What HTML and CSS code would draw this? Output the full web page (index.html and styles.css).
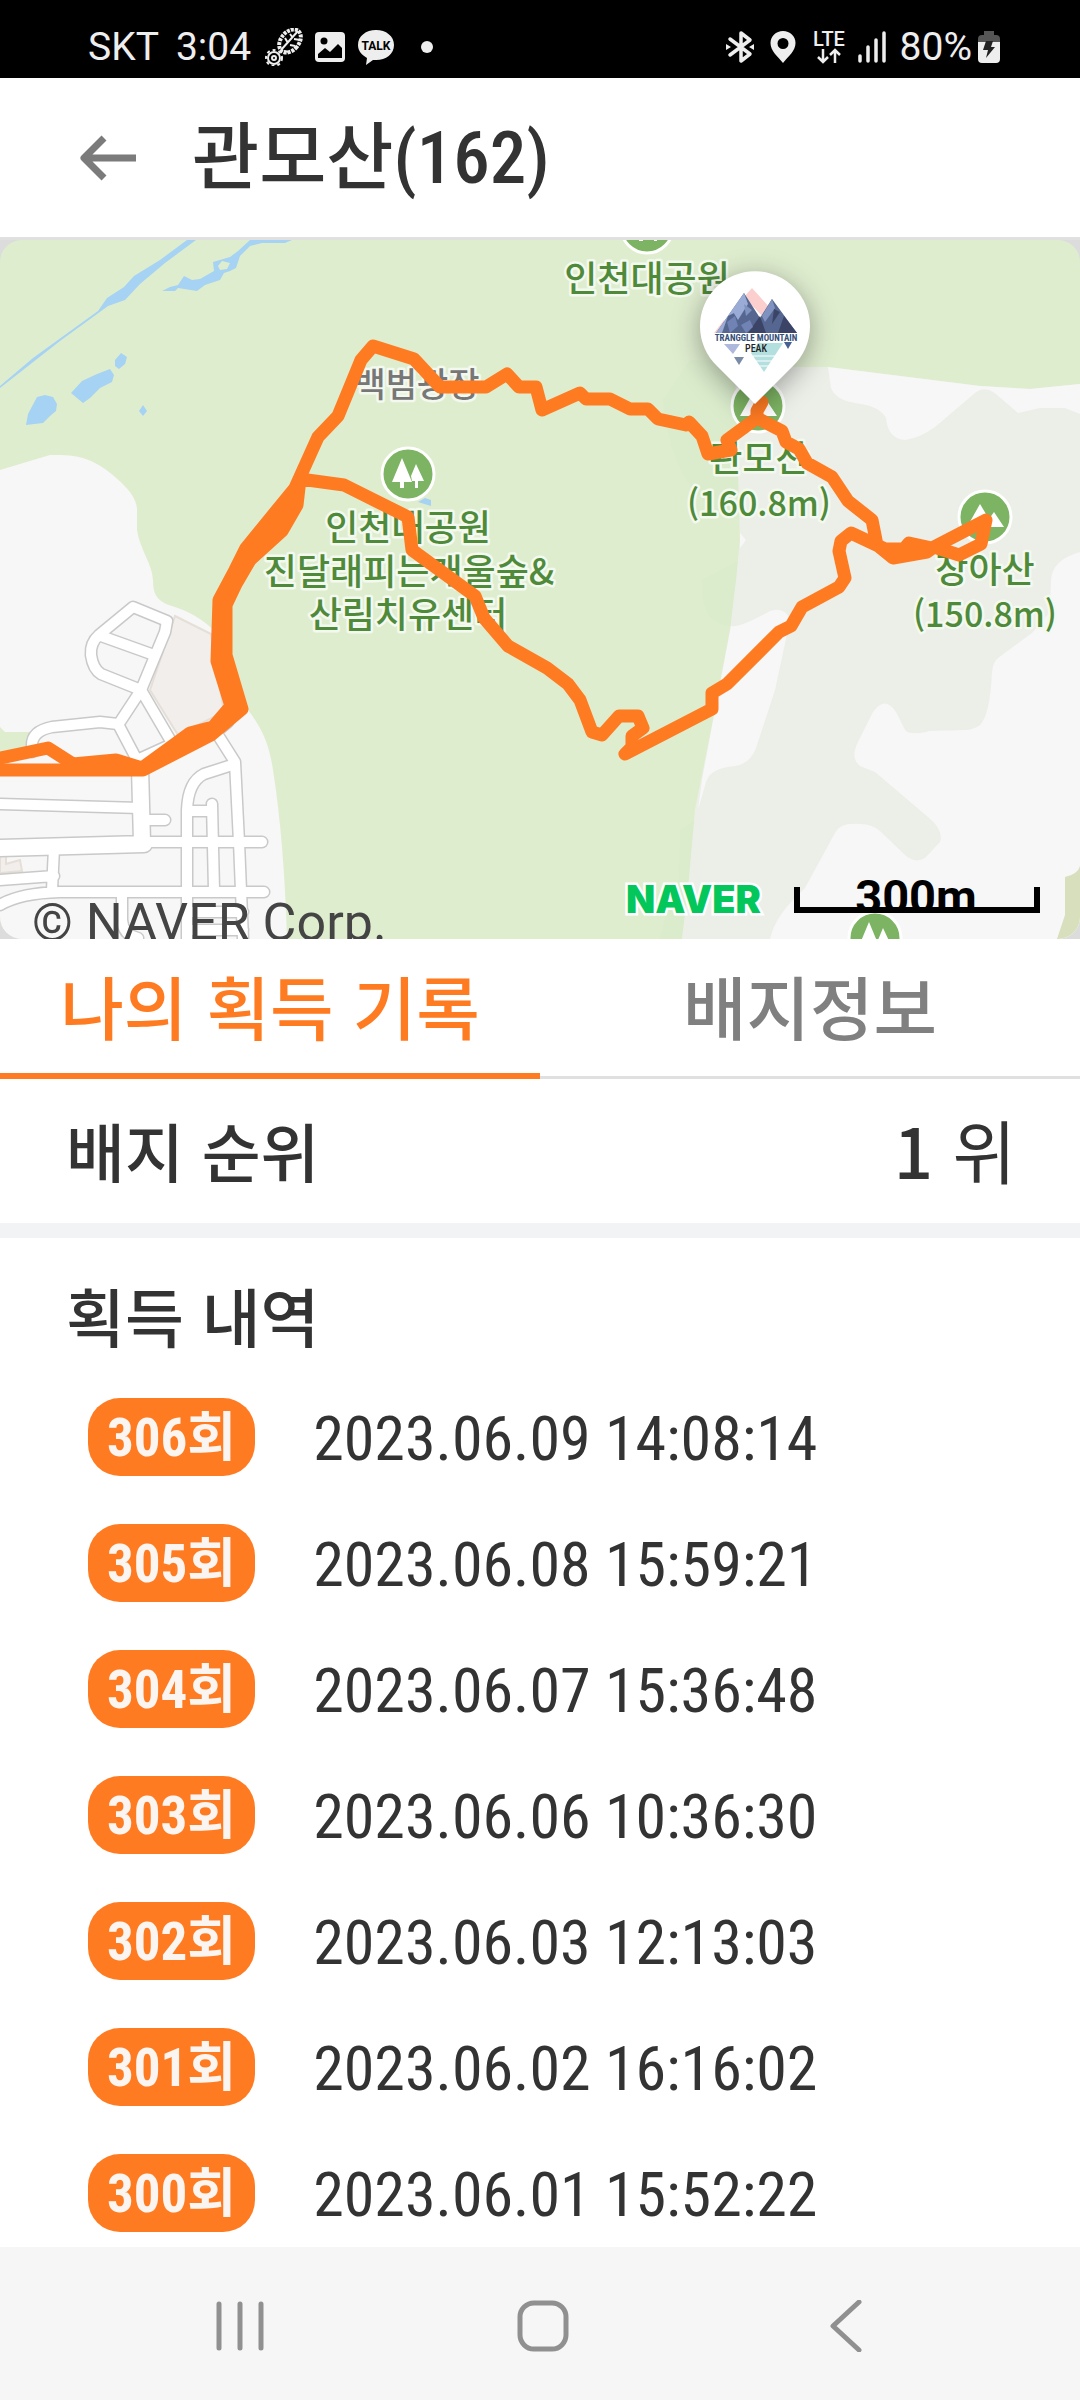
FILE: index.html
```html
<!DOCTYPE html>
<html lang="ko">
  <head>
    <meta charset="UTF-8" />
    <meta name="viewport" content="width=device-width, initial-scale=1.0" />
    <title>관모산(162)</title>
    <link rel="stylesheet" href="styles.css">
  </head>
  <body>
    <div class="status-bar">
      <div class="status-left">
        <span>SKT</span>
        <span class="clock">3:04</span>
        <svg class="icon-boot" width="38" height="38" viewBox="0 0 38 38">
          <g fill="none" stroke="#eee">
            <ellipse cx="25" cy="13" rx="9" ry="13" transform="rotate(40 25 13)" stroke-width="4" stroke-dasharray="3 1" />
            <path d="M16 22L33 3M20 10l3 5M25 6l3 4M19 23l5 1M25 17l5 1M29 11l6 1" stroke-width="2" />
            <circle cx="9" cy="30" r="6" stroke-width="2" />
            <circle cx="9" cy="30" r="8" stroke-width="2" stroke-dasharray="3 3" />
            <circle cx="9" cy="30" r="2" stroke-width="2" />
          </g>
        </svg>
        <svg class="icon-photo" width="30" height="32" viewBox="0 0 30 32">
          <rect y="1" width="30" height="30" rx="4" fill="#eee" />
          <circle cx="9" cy="10" r="3.5" fill="#000" />
          <path d="M3 23l7-6 5 4 8-8 4 4v10H3z" fill="#000" />
        </svg>
        <svg class="icon-talk" width="36" height="36" viewBox="0 0 36 36">
          <path d="M18 1c10 0 18 6 18 15s-8 15-18 15l-3 0-7 5 1-7C4 26 0 22 0 16 0 7 8 1 18 1z" fill="#eee" />
          <text x="18" y="21" text-anchor="middle" class="talk-text">TALK</text>
        </svg>
        <i class="dot"></i>
      </div>
      <div class="status-right">
        <svg width="28" height="34" viewBox="0 0 28 34">
          <path d="M4 9l20 15-9 7V3l9 7L4 25" fill="none" stroke="#eee" stroke-width="3.5" stroke-linejoin="round" stroke-linecap="round" />
          <path d="M0 14l5 3-5 3zM28 14l-5 3 5 3z" fill="#eee" />
        </svg>
        <svg class="icon-place" width="26" height="32" viewBox="0 0 26 32">
          <path fill-rule="evenodd" d="M13 0c7 0 12.500 5 12.500 12 0 8-7 13-12.500 20C7.500 25 .5 20 .5 12 .5 5 6 0 13 0zm0 7a5.500 5.500 0 1 0 0 11 5.500 5.500 0 0 0 0-11z" fill="#eee" />
        </svg>
        <svg class="icon-lte" width="35" height="36" viewBox="0 0 35 36">
          <text x="17" y="17" text-anchor="middle" class="lte-text">LTE</text>
          <path d="M11 20v13m-5-5l5 5 5-5M23 34V21m-5 5l5-5 5 5" fill="none" stroke="#eee" stroke-width="2.500" />
        </svg>
        <svg class="icon-signal" width="28" height="32" viewBox="0 0 28 32">
          <path d="M2 25v5M10 16v14M18 9v21M26 2v28" stroke="#eee" stroke-width="3.500" stroke-linecap="round" />
        </svg>
        <span>80%</span>
        <svg class="icon-battery" width="22" height="34" viewBox="0 0 22 34">
          <path d="M6 1h10v4h2q4 0 4 4v4H0V9q0-4 4-4h2z" fill="#555" />
          <path d="M0 12h22v17q0 4-4 4H4q-4 0-4-4z" fill="#eee" />
          <path d="M8 11h7l-2 6h4L8 28l2-8H5z" fill="#222" />
        </svg>
      </div>
    </div>

    <header class="header">
      <button class="back" aria-label="뒤로">
        <svg width="58" height="48" viewBox="0 0 58 48">
          <path d="M24 4L4 24l20 20M4 24h52" fill="none" stroke="#7b7b7b" stroke-width="7" stroke-linejoin="round" />
        </svg>
      </button>
      <h1>관모산(162)</h1>
    </header>

    <div class="map">
      <!-- y starts at 240, the height of the bars above -->
      <svg class="map-canvas" viewBox="0 240 1080 699">
        <defs>
          <g id="trees">
            <circle r="26" fill="#7db463" stroke="#fff" stroke-width="3" />
            <path d="M-6-16L4 8H-4v6h-4V8h-8zM8-10l8 17h-6v7H7V7H4L3 2z" fill="#fff" />
          </g>
          <g id="peak">
            <circle r="26" fill="#7db463" stroke="#fff" stroke-width="3" />
            <path d="M-18 10L-5-13 4 2l5-7L19 10z" fill="#fff" />
          </g>
          <g id="roads">
            <path d="M141 690L101 674Q93 669 91 655 90 643 99 635L133 607 167 621 165 632 141 690M101 636L154 655" />
            <path d="M141 690L118 725M32 752V745Q32 731 52 727L100 722 118 724 137 760M141 690L172 743M137 760L170 745" />
            <path d="M0 804L140 808M142 820H165M54 848L52 890M0 880L54 876M0 905Q20 893 60 892H264" />
            <path d="M187 939V810Q188 782 204 774L232 765M190 811H212M212 804L214 890M228 722L216 732 235 762 239 842 243 939M122 895V920Q123 935 138 938M190 912H243M190 930H243" />
            <path d="M135 842H262" />
          </g>
          <g id="main-roads">
            <path d="M140 768L142 842M0 848L144 844" />
          </g>
        </defs>

        <rect y="240" width="1080" height="700" fill="#dfedcf" />

        <!-- water -->
        <g fill="#a6d2f3">
          <path d="M0 386L33 358 98 311 107 298 124 287 134 276 160 260 187 240H196L165 263 140 284 125 300 108 306 60 341 0 388z" />
          <path fill-rule="evenodd" d="M162 291L170 287 178 285 184 276 192 280 200 279 214 271 213 262 230 257 238 251 250 240H292L285 243 262 243 250 246 240 256 236 268 230 271 224 273 220 280 205 285 197 291 178 288 175 291zM218 266L222 261 230 263 227 269 220 270z" />
          <path d="M71 393L82 381 97 374 110 369 114 375 112 382 100 388 90 398 83 403z" />
          <path d="M115 360L121 353 127 357 125 364 119 369 115 366z" />
          <path d="M26 425L28 414 37 397 45 395 53 397 57 404 56 411 50 416 43 423z" />
          <path d="M139 411L143 405 147 411 143 416zM418 502L425 498 431 500V506z" />
        </g>

        <!-- town on the left -->
        <path d="M0 470L50 455C80 454 92 460 105 469 125 484 137 497 137 510V530C140 550 152 563 153 580 153 595 157 602 175 607Q205 617 222 640L248 710C265 732 270 750 273 770Q284 840 287 939H0z" fill="#f7f7f7" />
        <path d="M0 727L5 732H30L27 750 0 756z" fill="#dfedcf" />
        <path d="M175 616L211 634 224 712 178 735 150 690zM0 855H6V864L20 860 22 871 0 873z" fill="#f2eeeb" stroke="#e5dfd8" stroke-width="2" />
        <g fill="none" stroke-linecap="round" stroke-linejoin="round">
          <use href="#roads" stroke="#c9c9c9" stroke-width="13" />
          <use href="#main-roads" stroke="#c9c9c9" stroke-width="19" />
          <use href="#roads" stroke="#fff" stroke-width="10" />
          <use href="#main-roads" stroke="#fff" stroke-width="16" />
        </g>

        <!-- hills on the right -->
        <path d="M663 400Q672 500 740 520V360H690zM702 580Q700 625 731 626L740 560zM680 830L695 820 682 939H660Q668 900 679 880z" fill="#daeccc" />
        <path d="M735 367H828L900 376 980 386 1030 389 1080 384V939H682L688 890 695 810 715 710 730 630 736 580 740 540z" fill="#ecefe8" />
        <g fill="#f7f7f7">
          <path d="M828 367L831 388Q836 400 855 403 880 406 886 418 888 439 905 440 920 438 935 427L975 393Q985 385 996 394L1018 413 1040 408H1065L1080 414V384L1030 389 980 386 900 376z" />
          <path d="M731 626Q740 628 770 611 785 606 790 620L775 690 756 748Q750 764 735 766 710 768 706 782L698 810 702 780 715 710z" />
          <path d="M1080 552Q1052 560 1051 580L1050 612 1032 633 998 658Q993 662 992 672 990 715 980 725 973 730 965 730L930 731Q910 736 905 730L896 712Q885 695 873 712L858 742Q850 758 860 766L875 772 928 817Q944 830 940 842L925 858Q915 864 905 855L880 831Q872 824 860 824 840 822 835 833L805 888Q775 915 770 939H1080zM740 533L746 540 740 548z" />
        </g>
        <path d="M1065 877Q1078 874 1080 866V939H1057L1065 915z" fill="#d8dfbd" />

        <use href="#trees" x="647" y="227" />
        <use href="#trees" x="408" y="474" />
        <use href="#trees" x="875" y="938" />
        <use href="#peak" x="758" y="406" />
        <use href="#peak" x="985" y="517" />

        <g class="place">
          <text x="647" y="292">인천대공원</text>
          <text x="417" y="397" class="plaza">백범광장</text>
          <text x="408" y="541">인천대공원</text>
          <text x="409" y="585">진달래피는개울숲&amp;</text>
          <text x="408" y="628">산림치유센터</text>
          <text x="759" y="472">관모산</text>
          <text x="759" y="516" class="elevation">(160.8m)</text>
          <text x="985" y="583">장아산</text>
          <text x="985" y="627" class="elevation">(150.8m)</text>
        </g>

        <!-- walked track -->
        <g fill="none" stroke="#ff7b22" stroke-width="13" stroke-linejoin="round" stroke-linecap="round">
          <path d="M-9 760L48 748 73 764 116 760 142 768 190 733 213 727 231 706 217 661 219 600 235 570 246 548 295 488 318 437 338 416 361 360 373 346 414 359 440 387H486L507 374 519 387H536L542 410 580 393 586 399H610L630 409H648L658 419 686 425 689 422 702 436 708 454 731 450 727 440 757 418V411L762 402" />
          <path d="M757 418L782 431 786 442 799 449 807 463 832 477 848 501 872 520 877 545 893 558 927 552 934 547 959 555 981 544 986 520 932 548 909 543 904 549H885L851 533 841 541 839 551 845 578 839 587 802 607 791 626 779 632 727 684 712 693V709L625 754 632 747V736L643 728 638 716H619L602 735 592 732 580 700 568 684 547 668 508 646 484 618 475 596 412 550 408 517 344 485 300 479 297 505 282 531 250 560 236 584 226 605V655L242 709 211 735 143 770H-9" />
          <path d="M293 492L262 540 234 585M224 605L222 655 236 704" />
        </g>

        <!-- badge pin -->
        <g class="pin">
          <path d="M755 404L717 366A55 55 0 1 1 793 366z" fill="#fff" />
        </g>
        <path d="M752 288L770 308 764 318 744 297zM714 333L724 320 726 333z" fill="#fbcfcd" />
        <path d="M716 333L744 293 760 318 772 299 797 333z" fill="#556690" />
        <path d="M716 333L744 293 740 310 728 316 722 333zM732 310L744 293 748 304 738 320z" fill="#9aacd6" />
        <path d="M762 316L772 299 775 308 765 322zM744 304L752 310 746 316z" fill="#8093c0" />
        <path d="M748 333L760 316 766 333zM778 333L784 316 797 333zM772 324L780 312 774 309z" fill="#3b4467" />
        <path d="M727 322L735 316 738 326 730 333zM741 325L750 320 753 327 746 333z" fill="#7183b4" />
        <path d="M724 344H740L733 354z" fill="#aeb7dc" />
        <path d="M734 357H744L739 365z" fill="#7a8ba8" />
        <path d="M784 342H792L788 349z" fill="#486091" />
        <path d="M751 353L758 343H783L764 372z" fill="#b3dfdf" />
        <path d="M753 356H775M756 361H772M759 366H769" stroke="#fff" />
        <text x="756" y="341" text-anchor="middle" class="badge-name">TRANGGLE MOUNTAIN</text>
        <text x="756" y="352" text-anchor="middle" class="badge-sub">PEAK</text>

        <text x="626" y="913" class="naver">NAVER</text>
        <path d="M797 887V910H1037V887" fill="none" stroke="#000" stroke-width="6" />
        <text x="916" y="913" text-anchor="middle" class="scale">300m</text>
        <text x="32" y="940" class="copyright">© NAVER Corp.</text>
      </svg>
    </div>

    <nav class="tabs">
      <button class="tab active">나의 획득 기록</button>
      <button class="tab">배지정보</button>
    </nav>

    <section class="rank">
      <h2>배지 순위</h2>
      <p><b>1</b> 위</p>
    </section>

    <section class="history">
      <h2>획득 내역</h2>
      <ul>
        <li><span class="count">306회</span><time>2023.06.09 14:08:14</time></li>
        <li><span class="count">305회</span><time>2023.06.08 15:59:21</time></li>
        <li><span class="count">304회</span><time>2023.06.07 15:36:48</time></li>
        <li><span class="count">303회</span><time>2023.06.06 10:36:30</time></li>
        <li><span class="count">302회</span><time>2023.06.03 12:13:03</time></li>
        <li><span class="count">301회</span><time>2023.06.02 16:16:02</time></li>
        <li><span class="count">300회</span><time>2023.06.01 15:52:22</time></li>
      </ul>
    </section>

    <nav class="system-nav">
      <button aria-label="최근 앱">
        <svg width="52" height="52" viewBox="0 0 52 52">
          <path d="M4 4v44M25 4v44M46 4v44" />
        </svg>
      </button>
      <button aria-label="홈">
        <svg width="52" height="52" viewBox="0 0 52 52">
          <rect x="3" y="3" width="46" height="46" rx="14" />
        </svg>
      </button>
      <button aria-label="뒤로">
        <svg width="52" height="52" viewBox="0 0 52 52">
          <path d="M40 2L14 26l26 24" />
        </svg>
      </button>
    </nav>
  </body>
</html>
```
FILE: styles.css
```css
* {
  box-sizing: border-box;
}

body {
  margin: 0;
  min-height: 100vh;
  display: flex;
  flex-direction: column;
  background-color: #fff;
  color: #333;
  font-family: "Noto Sans CJK KR", sans-serif;
}

h1,
h2,
p,
ul {
  margin: 0;
  padding: 0;
}

svg {
  display: block;
  flex-shrink: 0;
}

button {
  border: 0;
  padding: 0;
  background: none;
  font-family: inherit;
}

/* narrow digits */
h1,
.count,
time {
  font-family: "Roboto Condensed", "Noto Sans CJK KR", sans-serif;
}

/* status bar */
.status-bar {
  display: flex;
  justify-content: space-between;
  align-items: center;
  height: 78px;
  padding: 16px 80px 0 88px;
  background-color: #000;
  color: #eee;
  font-family: Roboto, sans-serif;
  font-size: 39px;
  line-height: 40px;
}

.status-left,
.status-right {
  display: flex;
  align-items: center;
}

.clock {
  margin: 0 14px 0 17px;
}

.icon-photo {
  margin: 0 13px 0 12px;
}

.dot {
  width: 12px;
  height: 12px;
  margin-left: 27px;
  border-radius: 50%;
  background-color: #eee;
}

.icon-place,
.icon-lte {
  margin-left: 16px;
}

.icon-signal {
  margin: 0 14px 0 11px;
}

.icon-battery {
  margin-left: 6px;
}

.talk-text {
  font: 700 12px Roboto, sans-serif;
}

.lte-text {
  font: 500 20px Roboto, sans-serif;
  fill: #eee;
}

/* header */
.header {
  display: flex;
  align-items: center;
  height: 162px;
  padding: 0 80px;
  border-bottom: 3px solid #e0e0e0;
}

.back {
  margin-right: 54px;
}

h1 {
  font-size: 73px;
  font-weight: 500;
  line-height: 82px;
}

/* map */
.map {
  background-color: #dcdcdc;
}

.map-canvas {
  width: 100%;
  border-radius: 22px;
}

.place {
  font: 500 36px "Noto Sans CJK KR", sans-serif;
  text-anchor: middle;
  fill: #4f8a3a;
  stroke: #f4f9ef;
  stroke-width: 5px;
  stroke-linejoin: round;
  paint-order: stroke;
}

.plaza {
  font-size: 34px;
  fill: #777;
}

.elevation {
  font-size: 34px;
}

.pin {
  filter: drop-shadow(0 6px 14px rgba(0, 0, 0, 0.35));
}

.badge-name {
  font: 700 9px "Roboto Condensed", sans-serif;
  fill: #344f7a;
}

.badge-sub {
  font: 500 10px "Roboto Condensed", sans-serif;
  fill: #222;
}

.naver {
  font: 900 38px Inter, sans-serif;
  fill: #03c75a;
  stroke: #fff;
  stroke-width: 5px;
  paint-order: stroke;
}

.scale {
  font: 700 47px Roboto, sans-serif;
}

.copyright {
  font: 400 52px Roboto, sans-serif;
  fill: #444;
}

/* tabs */
.tabs {
  display: flex;
  height: 140px;
}

.tab {
  flex: 1;
  padding-bottom: 6px;
  border-bottom: 3px solid #e0e0e0;
  color: #808080;
  font-size: 69px;
  font-weight: 500;
  line-height: 80px;
}

.tab.active {
  padding-bottom: 3px;
  border-bottom: 6px solid #ff7b22;
  color: #ff7b22;
}

/* rank */
h2 {
  font-size: 64px;
  font-weight: 500;
  line-height: 80px;
}

.rank {
  display: flex;
  justify-content: space-between;
  align-items: center;
  height: 159px;
  padding: 0 64px 4px 66px;
  border-bottom: 15px solid #f1f3f5;
}

.rank p {
  font-size: 69px;
  line-height: 80px;
}

.rank b {
  font-weight: 500;
}

/* history */
.history {
  flex: 1;
  padding: 36px 66px 15px;
}

.history ul {
  display: flex;
  flex-direction: column;
  gap: 48px;
  padding: 44px 22px 0;
  list-style: none;
}

.history li {
  display: flex;
  align-items: center;
  gap: 58px;
}

.count {
  height: 78px;
  padding: 0 19px;
  border-radius: 32px;
  background-color: #ff7b22;
  color: #faf5f0;
  font-size: 53px;
  font-weight: 700;
  line-height: 80px;
}

time {
  padding-top: 4px;
  font-size: 62px;
  line-height: 74px;
}

/* system navigation */
.system-nav {
  display: flex;
  height: 153px;
  padding: 4px 84px 0 90px;
  background-color: #f6f6f6;
}

.system-nav button {
  flex: 1;
  display: flex;
  justify-content: center;
  align-items: center;
}

.system-nav svg {
  fill: none;
  stroke: #909090;
  stroke-width: 5px;
  stroke-linecap: round;
  stroke-linejoin: round;
}
```
